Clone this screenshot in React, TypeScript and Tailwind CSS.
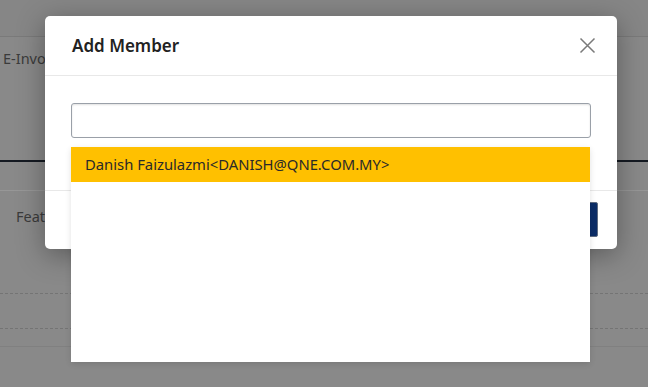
const font = { fontFamily: '"Noto Sans", "Open Sans", Arial, sans-serif' };

function CloseIcon() {
  return (
    <svg width="17" height="17" viewBox="0 0 17 17" className="text-[#7a7a7a]">
      <path d="M1.5 1.5 L15.5 15.5 M15.5 1.5 L1.5 15.5" stroke="currentColor" strokeWidth="1.5" fill="none" />
    </svg>
  );
}

function BackgroundPage() {
  return (
    <div className="w-[648px] h-[387px] bg-[#898989] flex flex-col overflow-hidden">
      <div className="h-[37px] bg-[#868686] border-b border-[#7a7a7a]" />
      <div className="h-[44px] flex items-center px-[3px] text-[14.5px] text-[#3b3b3b]">E-Invoice</div>
      <div className="h-[79px]" />
      <div className="h-[2px] bg-[#151a22]" />
      <div className="h-[28px]" />
      <div className="h-[1px] bg-[#979797]" />
      <div className="h-[52px] flex items-center px-[16px] text-[14.5px] text-[#3b3b3b]">Features</div>
      <div className="h-[50px]" />
      <div className="h-[1px] border-t border-dashed border-[#747474]" />
      <div className="h-[34px]" />
      <div className="h-[1px] border-t border-dashed border-[#747474]" />
      <div className="h-[17px]" />
      <div className="h-[1px] bg-[#808080]" />
    </div>
  );
}

export default function App() {
  return (
    <div className="relative w-[648px] h-[387px] overflow-hidden" style={font}>
      <BackgroundPage />

      {/* modal */}
      <div className="absolute left-[45px] top-[16px] w-[572px] h-[233px] bg-white rounded-[5px] shadow-[0_6px_28px_rgba(0,0,0,0.35)] flex flex-col">
        <div className="h-[60px] border-b border-[#e8e8e8] flex items-center justify-between pl-[27px] pr-[21px]">
          <span className="text-[17px] font-semibold text-[#222] mt-[1px]">Add Member</span>
          <CloseIcon />
        </div>
        <div className="h-[115px] border-b border-[#e8e8e8] pt-[27px] px-[26px]">
          <div className="h-[35px] border border-[#9aa0a8] rounded-[3px] shadow-[inset_0_1px_2px_rgba(0,0,0,0.12)]" />
        </div>
        <div className="flex-1 flex justify-end items-start pt-[11px] pr-[19px]">
          <div className="w-[80px] h-[35px] bg-[#0b2c66] border border-[#5e6b80] rounded-[2px]" />
        </div>
      </div>

      {/* dropdown list */}
      <div className="absolute left-[71px] top-[147px] w-[519px] h-[215px] bg-white shadow-[0_2px_6px_rgba(0,0,0,0.12)]">
        <div className="h-[35px] bg-[#ffc000] flex items-center px-[14px] text-[14.8px] text-[#2a2a2a]">
          Danish Faizulazmi&lt;DANISH@QNE.COM.MY&gt;
        </div>
      </div>
    </div>
  );
}
